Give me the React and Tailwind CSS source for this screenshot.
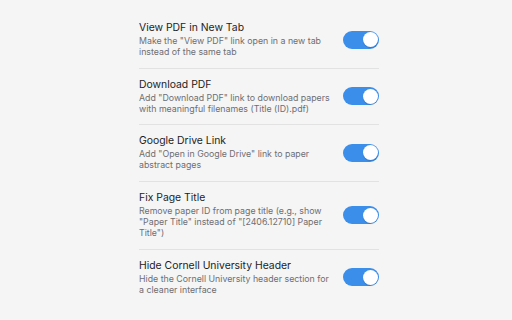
import React from "react";

const items = [
  {
    title: "View PDF in New Tab",
    desc: 'Make the "View PDF" link open in a new tab instead of the same tab',
  },
  {
    title: "Download PDF",
    desc: 'Add "Download PDF" link to download papers with meaningful filenames (Title (ID).pdf)',
  },
  {
    title: "Google Drive Link",
    desc: 'Add "Open in Google Drive" link to paper abstract pages',
  },
  {
    title: "Fix Page Title",
    desc: 'Remove paper ID from page title (e.g., show "Paper Title" instead of "[2406.12710] Paper Title")',
  },
  {
    title: "Hide Cornell University Header",
    desc: "Hide the Cornell University header section for a cleaner interface",
  },
];

function Toggle() {
  return (
    <div className="relative h-[18px] w-[36px] shrink-0 rounded-full bg-[#3b8eea]">
      <div className="absolute right-[1.5px] top-[1.5px] h-[15px] w-[15px] rounded-full bg-white shadow-[0_1px_1px_rgba(0,0,0,0.15)]" />
    </div>
  );
}

export default function App() {
  return (
    <div
      className="h-[320px] w-[512px] overflow-hidden bg-[#f5f5f5] pl-[139px] pt-[12px]"
      style={{ fontFamily: "Inter, 'Noto Sans', sans-serif" }}
    >
      <div className="w-[240px]">
        {items.map((it, i) => (
          <div
            key={i}
            className={`flex items-center gap-[10px] pt-[10px] pb-[10px] ${
              i < items.length - 1 ? "border-b border-[#e2e2e2]" : ""
            }`}
          >
            <div className="flex-1">
              <div className="text-[10.4px] leading-[12px] text-[#1d1d1f]">{it.title}</div>
              <div className="mt-[1px] text-[8.8px] leading-[11.3px] text-[#6e6e73]">{it.desc}</div>
            </div>
            <Toggle />
          </div>
        ))}
      </div>
    </div>
  );
}
